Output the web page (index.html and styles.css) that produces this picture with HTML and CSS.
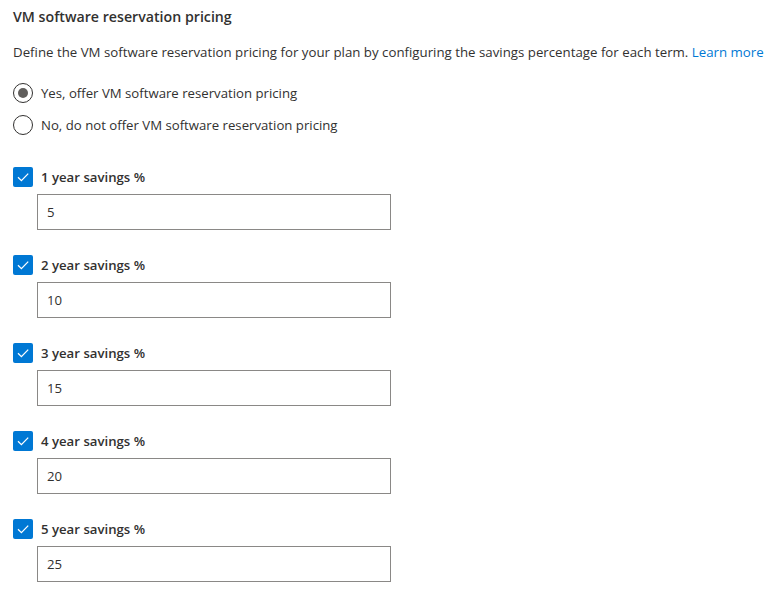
FILE: index.html
```html
<!DOCTYPE html>
<html>
<head>
<meta charset="utf-8">
<link rel="stylesheet" href="styles.css">
</head>
<body>
<div class="page">
  <h2 class="title">VM software reservation pricing</h2>
  <p class="desc">Define the VM software reservation pricing for your plan by configuring the savings percentage for each term. <a class="link" href="#">Learn more</a></p>
  <div class="radios">
    <div class="radio-row"><span class="radio checked"></span><span class="radio-label">Yes, offer VM software reservation pricing</span></div>
    <div class="radio-row"><span class="radio"></span><span class="radio-label">No, do not offer VM software reservation pricing</span></div>
  </div>
  <div class="terms">
    <div class="term">
      <div class="check-row"><span class="check"><svg viewBox="0 0 20 20" width="20" height="20"><path d="M5 10.3 L8.4 13.6 L15.2 6.6" fill="none" stroke="#fff" stroke-width="1.3"/></svg></span><span class="check-label">1 year savings %</span></div>
      <div class="field">5</div>
    </div>
    <div class="term">
      <div class="check-row"><span class="check"><svg viewBox="0 0 20 20" width="20" height="20"><path d="M5 10.3 L8.4 13.6 L15.2 6.6" fill="none" stroke="#fff" stroke-width="1.3"/></svg></span><span class="check-label">2 year savings %</span></div>
      <div class="field">10</div>
    </div>
    <div class="term">
      <div class="check-row"><span class="check"><svg viewBox="0 0 20 20" width="20" height="20"><path d="M5 10.3 L8.4 13.6 L15.2 6.6" fill="none" stroke="#fff" stroke-width="1.3"/></svg></span><span class="check-label">3 year savings %</span></div>
      <div class="field">15</div>
    </div>
    <div class="term">
      <div class="check-row"><span class="check"><svg viewBox="0 0 20 20" width="20" height="20"><path d="M5 10.3 L8.4 13.6 L15.2 6.6" fill="none" stroke="#fff" stroke-width="1.3"/></svg></span><span class="check-label">4 year savings %</span></div>
      <div class="field">20</div>
    </div>
    <div class="term">
      <div class="check-row"><span class="check"><svg viewBox="0 0 20 20" width="20" height="20"><path d="M5 10.3 L8.4 13.6 L15.2 6.6" fill="none" stroke="#fff" stroke-width="1.3"/></svg></span><span class="check-label">5 year savings %</span></div>
      <div class="field">25</div>
    </div>
  </div>
</div>
</body>
</html>
```
FILE: styles.css
```css
html, body {
  margin: 0;
  padding: 0;
  background: #fff;
}
body {
  font-family: "Open Sans", "Noto Sans", sans-serif;
  font-size: 13.2px;
  color: #323130;
}
.page {
  padding: 7px 0 0 13px;
}
.title {
  margin: 0;
  font-size: 14.2px;
  font-weight: 600;
  line-height: 20px;
  color: #323130;
}
.desc {
  margin: 15px 0 0 0;
  font-size: 13.28px;
  line-height: 20px;
  white-space: nowrap;
}
.link {
  color: #0078d4;
  text-decoration: none;
}
.radios {
  margin-top: 21px;
  display: flex;
  flex-direction: column;
  gap: 12px;
}
.radio-row {
  display: flex;
  align-items: center;
  height: 20px;
}
.radio {
  box-sizing: border-box;
  width: 20px;
  height: 20px;
  border: 1px solid #323130;
  border-radius: 50%;
  position: relative;
  flex: none;
}
.radio.checked::after {
  content: "";
  position: absolute;
  left: 4px;
  top: 4px;
  width: 10px;
  height: 10px;
  border-radius: 50%;
  background: #605e5c;
}
.radio-label {
  margin-left: 8px;
}
.terms {
  margin-top: 32px;
  display: flex;
  flex-direction: column;
  gap: 25px;
}
.check-row {
  display: flex;
  align-items: center;
  height: 20px;
}
.check {
  width: 20px;
  height: 20px;
  background: #0078d4;
  border-radius: 2px;
  flex: none;
  display: block;
}
.check svg {
  display: block;
}
.check-label {
  margin-left: 8px;
  font-weight: 600;
}
.field {
  box-sizing: border-box;
  margin: 7px 0 0 24px;
  width: 354px;
  height: 36px;
  border: 1px solid #8a8886;
  padding: 0 9px;
  display: flex;
  align-items: center;
  color: #323130;
}
```
